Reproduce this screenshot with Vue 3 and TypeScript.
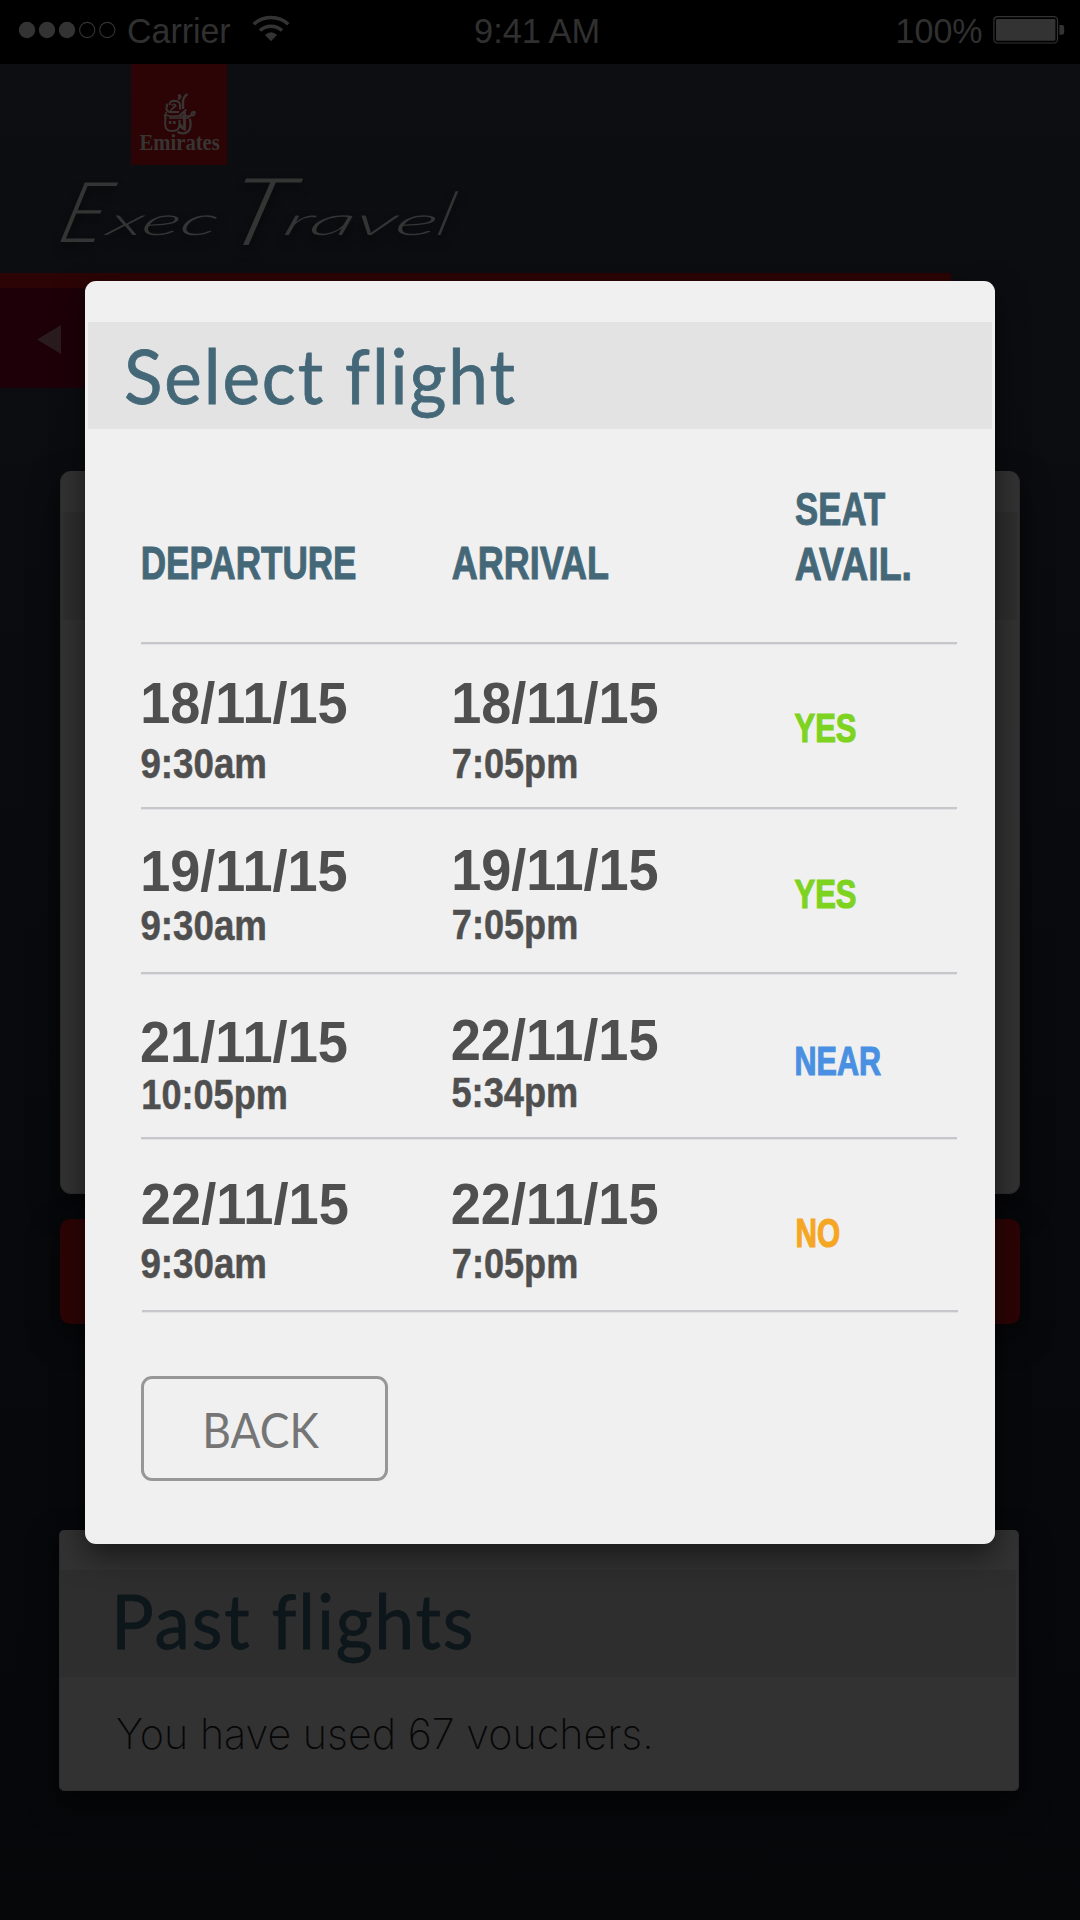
<script setup lang="ts">
interface Leg {
  date: string
  time: string
  dateBox: [number, number]
  timeBox: [number, number]
  top: number
}

interface Flight {
  departure: Leg
  arrival: Leg
  gap: number
  height: number
  seat: string
  seatBox: [number, number]
  seatTop: number
  tone: string
}

const flights: Flight[] = [
  {
    departure: { date: '18/11/15', time: '9:30am', dateBox: [2, 203.5], timeBox: [0.3, 123.7], top: 28 },
    arrival: { date: '18/11/15', time: '7:05pm', dateBox: [2, 203.5], timeBox: [0.7, 123.7], top: 28 },
    gap: 8, height: 165, seat: 'YES', seatBox: [-0.5, 61], seatTop: 62, tone: 'yes',
  },
  {
    departure: { date: '19/11/15', time: '9:30am', dateBox: [2, 203.5], timeBox: [0.3, 123.7], top: 31 },
    arrival: { date: '19/11/15', time: '7:05pm', dateBox: [2, 203.5], timeBox: [0.7, 123.7], top: 30 },
    gap: 2, height: 165, seat: 'YES', seatBox: [-0.5, 61], seatTop: 63, tone: 'yes',
  },
  {
    departure: { date: '21/11/15', time: '10:05pm', dateBox: [0.8, 205], timeBox: [2, 143], top: 37 },
    arrival: { date: '22/11/15', time: '5:34pm', dateBox: [0.5, 205], timeBox: [0.3, 124], top: 35 },
    gap: 0, height: 165, seat: 'NEAR', seatBox: [1, 84.5], seatTop: 65, tone: 'near',
  },
  {
    departure: { date: '22/11/15', time: '9:30am', dateBox: [1.7, 205], timeBox: [0.3, 123.7], top: 34 },
    arrival: { date: '22/11/15', time: '7:05pm', dateBox: [0.5, 205], timeBox: [0.7, 123.7], top: 34 },
    gap: 7, height: 173, seat: 'NO', seatBox: [2, 42.5], seatTop: 72, tone: 'no',
  },
]

// Condenses a line of text so that its ink starts at box[0] and is box[1] wide.
const vFit = {
  mounted(el: HTMLElement, binding: { value: [number, number] }) {
    const ctx = document.createElement('canvas').getContext('2d')
    if (!ctx) return
    const cs = getComputedStyle(el)
    ctx.font = `${cs.fontStyle} ${cs.fontWeight} ${cs.fontSize} ${cs.fontFamily}`
    if (cs.letterSpacing !== 'normal') (ctx as any).letterSpacing = cs.letterSpacing
    const m = ctx.measureText((el.textContent ?? '').trim())
    const left = -m.actualBoundingBoxLeft
    const scale = binding.value[1] / (m.actualBoundingBoxRight - left)
    el.style.transform = `translateX(${binding.value[0] - left * scale}px) scaleX(${scale})`
  },
}
</script>

<template>
  <div class="screen">
    <header class="status">
      <div class="status-left">
        <svg class="signal" width="100" height="18" viewBox="0 0 100 18">
          <circle cx="9" cy="9" r="8.2" fill="#333" />
          <circle cx="29" cy="9" r="8.2" fill="#333" />
          <circle cx="49" cy="9" r="8.2" fill="#333" />
          <circle cx="69.2" cy="9" r="7.6" fill="none" stroke="#333" stroke-width="1.1" />
          <circle cx="89.3" cy="9" r="7.6" fill="none" stroke="#333" stroke-width="1.1" />
        </svg>
        <span class="carrier" v-fit="[0, 103]">Carrier</span>
        <svg class="wifi" width="38" height="27" viewBox="0 0 38 27">
          <path d="M1.7 9.2A25.6 25.6 0 0 1 36.3 9.2" fill="none" stroke="#333" stroke-width="3.5" />
          <path d="M7.9 15.5A16.6 16.6 0 0 1 30.1 15.5" fill="none" stroke="#333" stroke-width="3.5" />
          <path d="M19 26.2L12.9 20.1Q19 14.6 25.1 20.1Z" fill="#333" />
        </svg>
      </div>
      <span class="clock" v-fit="[0, 125]">9:41 AM</span>
      <div class="status-right">
        <span class="percent" v-fit="[0.5, 84]">100%</span>
        <svg width="72" height="28" viewBox="0 0 72 28">
          <rect x="0.9" y="0.7" width="63.6" height="26.3" rx="3.6" fill="none" stroke="#333" stroke-width="1.2" />
          <rect x="3" y="3" width="59.4" height="21.8" rx="1.2" fill="#333" />
          <path d="M66.4 9h2.4q2.4 0 2.4 2.4v5q0 2.4-2.4 2.4h-2.4z" fill="#333" />
        </svg>
      </div>
    </header>

    <section class="brand">
      <div class="logo">
        <svg class="emblem" width="34" height="42" viewBox="0 0 34 42" fill="none" stroke="#383433">
          <path d="M24.5 1Q19.8 4.5 20 9V16" stroke-width="2.4" />
          <path d="M15.5 1.5l1.6 2-1.6 3" stroke-width="2.6" />
          <path d="M6.5 12Q6.5 7.8 11.5 7.8Q16.5 8 17 11.5V16.5" stroke-width="2" />
          <path d="M8.5 12.5Q11 10 12.5 12L8 17M13.5 12.5L7 18" stroke-width="1.3" />
          <path d="M3 11Q5 12 3.5 14.5Q3 18.7 7 19H16M23.5 16.5L16 23" stroke-width="2" />
          <path d="M3 19V22Q8 24 13 23H27L25.5 25H6" stroke-width="1.5" />
          <path d="M1.2 21.5Q3.4 24 2.2 27V32Q2.5 38 9 38Q16.5 38 16.5 31.5V27" stroke-width="2" />
          <path d="M21.5 19V36Q17.5 34.5 17.2 31" stroke-width="2.8" />
          <path d="M26.8 26Q28 29 27.5 33Q26.5 40.5 19.5 40.3Q16 40.3 14.5 38.5" stroke-width="2.2" />
          <path d="M5.8 29.5h2.6M10 29.5h2.6" stroke-width="2.8" />
          <path d="M28.5 21.5Q28.5 18.5 31.5 19Q32.5 21 30 22.5L27 22.5" stroke-width="2" />
        </svg>
        <span class="logo-name" v-fit="[8.5, 80]">Emirates</span>
      </div>
      <svg class="wordmark" width="440" height="90" viewBox="0 0 440 90">
        <text class="script" transform="translate(0 68) skewX(-16) translate(0 -68)"><tspan x="12" y="75" font-size="84" textLength="46" lengthAdjust="spacingAndGlyphs">E</tspan><tspan x="60" y="68" font-size="39" textLength="110" lengthAdjust="spacingAndGlyphs">xec</tspan><tspan x="178" y="78" font-size="94" textLength="60" lengthAdjust="spacingAndGlyphs">T</tspan><tspan x="236" y="68" font-size="39" textLength="154" lengthAdjust="spacingAndGlyphs">rave</tspan><tspan x="390" y="68" font-size="60">l</tspan></text>
      </svg>
    </section>

    <div class="ribbon"></div>
    <nav class="nav">
      <svg width="24" height="29" viewBox="0 0 24 29"><path d="M24 0V29L0 14.5Z" fill="#291b1e" /></svg>
    </nav>

    <section class="card first"><div class="band"></div></section>
    <div class="cta"></div>
    <section class="card past">
      <div class="band"><h2 class="past-title" v-fit="[0, 354]">Past flights</h2></div>
      <p class="used" v-fit="[0, 533]">You have used 67 vouchers.</p>
    </section>

    <main class="modal">
      <div class="modal-head"><h1 class="title" v-fit="[0, 389]">Select flight</h1></div>
      <div class="grid heads">
        <span class="head single" v-fit="[2, 212.5]">DEPARTURE</span>
        <span class="head single" v-fit="[0.5, 156]">ARRIVAL</span>
        <div class="seat-head">
          <span class="head" v-fit="[0.8, 89.5]">SEAT</span>
          <span class="head" v-fit="[0.5, 114]">AVAIL.</span>
        </div>
      </div>
      <div
        v-for="(f, i) in flights"
        :key="i"
        class="grid row"
        :style="{ height: f.height + 'px' }"
      >
        <div v-for="(leg, k) in [f.departure, f.arrival]" :key="k" class="leg" :style="{ paddingTop: leg.top + 'px', gap: f.gap + 'px' }">
          <span class="date" v-fit="leg.dateBox">{{ leg.date }}</span>
          <span class="time" v-fit="leg.timeBox">{{ leg.time }}</span>
        </div>
        <div class="leg" :style="{ paddingTop: f.seatTop + 'px' }">
          <span class="seat" :class="f.tone" v-fit="f.seatBox">{{ f.seat }}</span>
        </div>
      </div>
      <button class="back"><span v-fit="[0, 113]">BACK</span></button>
    </main>
  </div>
</template>

<style>
body {
  margin: 0;
  background: #000;
}
</style>

<style scoped>
.screen {
  position: relative;
  width: 1080px;
  height: 1920px;
  overflow: hidden;
  background: linear-gradient(#0c0e11 64px, #0b0c0f 500px, #08090c 1200px, #060709 1920px);
  font-family: "Liberation Sans", Arial, sans-serif;
}
.screen span,
.screen h1,
.screen h2,
.screen p {
  display: block;
  width: max-content;
  margin: 0;
  white-space: nowrap;
  transform-origin: 0 0;
}
.status {
  display: grid;
  grid-template-columns: 475px 422px 183px;
  height: 64px;
  background: #000;
  color: #303030;
  font-size: 35px;
  line-height: 62px;
}
.status-left,
.status-right {
  display: flex;
}
.signal {
  margin: 21px 10px 0 18px;
}
.carrier {
  flex: 0 0 103px;
}
.status-left .carrier {
  width: 103px;
}
.wifi {
  margin: 15px 0 0 21px;
}
.status-right .percent {
  width: 84px;
}
.status-right svg {
  margin: 16px 0 0 12px;
}
.brand {
  height: 209px;
}
.logo {
  display: flex;
  flex-direction: column;
  width: 96px;
  height: 101px;
  margin-left: 131px;
  background: #2c0405;
}
.emblem {
  flex: none;
  margin: 29px 0 0 32px;
}
.logo .logo-name {
  margin-top: -5px;
  color: #383433;
  font: bold 24px/24px "Liberation Serif", serif;
}
.wordmark {
  display: block;
  margin: 2px 0 0 45px;
  overflow: visible;
  filter: drop-shadow(0 6px 5px rgba(0, 0, 0, 0.5));
}
.script {
  fill: #343434;
  font-family: Lato, sans-serif;
  font-style: italic;
  font-weight: 300;
}
.ribbon {
  width: 951px;
  height: 15px;
  background: #2c0405;
}
.nav {
  display: flex;
  align-items: flex-start;
  width: 951px;
  height: 100px;
  background: #1e0008;
}
.nav svg {
  margin: 37px 0 0 37px;
}
.card {
  box-sizing: border-box;
  width: 960px;
  margin-left: 60px;
  border: solid #2c2c2c;
  border-width: 0 1px 1px;
  background: #323232;
  box-shadow: 0 12px 30px rgba(0, 0, 0, 0.5);
}
.first {
  height: 723px;
  margin-top: 83px;
  padding: 41px 2px 0;
  border-radius: 11px;
}
.band {
  height: 108px;
  background: #2e2e2e;
}
.cta {
  width: 960px;
  height: 105px;
  margin: 25px 0 0 60px;
  border-radius: 10px;
  background: #2c0405;
  box-shadow: 0 12px 30px rgba(0, 0, 0, 0.5);
}
.past {
  width: 960px;
  height: 261px;
  margin: 206px 0 0 59px;
  padding: 40px 2px 0 0;
  border-radius: 5px;
}
.past .past-title {
  padding-top: 8px;
  margin-left: 57px;
  color: #0d171b;
  font: 400 75px/84px Lato, sans-serif;
  letter-spacing: 2px;
  -webkit-text-stroke: 0.8px #0d171b;
}
.past .band {
  height: 107px;
}
.past .used {
  margin: 31px 0 0 57px;
  color: #070707;
  font: 200 42.5px/52px Inter, sans-serif;
}
.modal {
  position: absolute;
  left: 85px;
  top: 281px;
  box-sizing: border-box;
  width: 910px;
  height: 1263px;
  padding: 41px 3px 0;
  border-radius: 11px;
  background: #f0f0f0;
  box-shadow: 0 12px 30px rgba(0, 0, 0, 0.5);
}
.modal-head {
  height: 107px;
  background: #e3e3e3;
}
.modal .title {
  padding-top: 11px;
  margin-left: 38px;
  color: #456878;
  font: 400 75px/84px Lato, sans-serif;
  letter-spacing: 2px;
  -webkit-text-stroke: 0.8px #456878;
}
.grid {
  display: grid;
  grid-template-columns: 311px 343px 162px;
  align-items: start;
  box-sizing: border-box;
  width: 816px;
  margin-left: 53px;
}
.row,
.heads {
  background: linear-gradient(#c7c7cb 0 2px, #e2e2e4 2px 3px) 0 100% / 100% 3px no-repeat;
}
.row:nth-last-child(2) {
  width: 817px;
  background-position: 1px 100%;
  background-size: 816px 3px;
}
.heads {
  height: 216px;
}
.head {
  color: #456878;
  font-size: 47px;
  font-weight: bold;
  line-height: 55px;
  -webkit-text-stroke: 1px #456878;
}
.head.single {
  padding-top: 106px;
}
.seat-head {
  padding-top: 52px;
}
.leg {
  display: flex;
  flex-direction: column;
  color: #4f4f4f;
  font-weight: bold;
}
.date {
  font-size: 58px;
  line-height: 60px;
}
.time {
  font-size: 43px;
  line-height: 44px;
  -webkit-text-stroke: 0.5px #4f4f4f;
}
.seat {
  font-size: 41px;
  line-height: 42px;
  -webkit-text-stroke: 1.2px currentColor;
}
.yes {
  color: #7ed321;
}
.near {
  color: #4a90e2;
}
.no {
  color: #f5a623;
}
.back {
  display: flex;
  box-sizing: border-box;
  width: 247px;
  height: 105px;
  margin: 63px 0 0 53px;
  padding: 22px 0 0 62px;
  border: 3px solid #979797;
  border-radius: 11px;
  background: none;
  color: #757575;
  font: 400 48px/58px Lato, sans-serif;
}
</style>
